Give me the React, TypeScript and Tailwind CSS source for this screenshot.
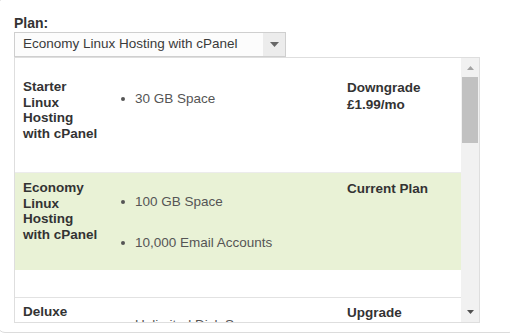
import { FC } from "react";

type Plan = {
  name: string;
  features: string[];
  action: string[];
  current?: boolean;
  rowClass: string;
  listClass: string;
};

const plans: Plan[] = [
  {
    name: "Starter Linux Hosting with cPanel",
    features: ["30 GB Space"],
    action: ["Downgrade", "£1.99/mo"],
    rowClass: "h-[115px] pt-[21px] border-b border-[#ececec]",
    listClass: "pt-[12px]",
  },
  {
    name: "Economy Linux Hosting with cPanel",
    features: ["100 GB Space", "10,000 Email Accounts"],
    action: ["Current Plan"],
    current: true,
    rowClass: "h-[97px] pt-[7px] bg-[#e9f2d6]",
    listClass: "pt-[14px]",
  },
  {
    name: "Deluxe Linux Hosting with cPanel",
    features: ["Unlimited Disk Space", "Unlimited Email Accounts"],
    action: ["Upgrade", "£4.99/mo"],
    rowClass: "pt-[6px]",
    listClass: "pt-[13px]",
  },
];

const PlanRow: FC<{ plan: Plan }> = ({ plan }) => (
  <div className={`grid grid-cols-[78px_246px_1fr] pl-[8px] ${plan.rowClass}`}>
    <div className="font-bold text-[13.5px] leading-[15.7px] text-[#333]">
      {plan.name}
    </div>
    <ul className={`flex flex-col gap-[25.5px] pl-[20px] ${plan.listClass}`}>
      {plan.features.map((f) => (
        <li key={f} className="flex items-center gap-[10px] text-[13.5px] leading-[15.5px] text-[#555]">
          <span className="w-[4px] h-[4px] rounded-full bg-[#555] shrink-0" />
          {f}
        </li>
      ))}
    </ul>
    <div className="font-bold text-[13.5px] leading-[17px] text-[#333]">
      {plan.action.map((a) => (
        <div key={a}>{a}</div>
      ))}
    </div>
  </div>
);

export default function App() {
  return (
    <div className="w-[520px] h-[335px] -ml-[3px] -mt-[2px] rounded-lg border border-[#dcdcdc] bg-white pl-[16px] pt-[16px] overflow-hidden font-['Liberation_Sans',Arial,sans-serif] text-[#333]">
      <div className="text-[14px] font-bold leading-[16px] h-[17px]">Plan:</div>

      {/* select */}
      <div className="flex w-[272px] h-[25px] border border-[#cfcfcf] bg-[#fcfcfc]">
        <div className="flex-1 pl-[8px] text-[13.5px] leading-[21px] text-[#3a3a3a]">
          Economy Linux Hosting with cPanel
        </div>
        <div className="w-[22px] bg-[#ececec] flex items-center justify-center">
          <svg width="9" height="5" viewBox="0 0 9 5">
            <polygon points="0,0 9,0 4.5,5" fill="#666" />
          </svg>
        </div>
      </div>

      {/* plan list */}
      <div className="flex w-[466px] h-[266px] border border-[#dedede]">
        <div className="flex-1 overflow-hidden bg-white">
          <PlanRow plan={plans[0]} />
          <PlanRow plan={plans[1]} />
          <div className="h-[28px] border-b border-[#e2e2e2]" />
          <PlanRow plan={plans[2]} />
        </div>
        <div className="w-[18px] bg-[#f1f1f1] flex flex-col">
          <div className="h-[19px] flex items-center justify-center">
            <svg width="7" height="4" viewBox="0 0 7 4">
              <polygon points="0,4 7,4 3.5,0" fill="#a3a3a3" />
            </svg>
          </div>
          <div className="h-[66px] mx-[1px] bg-[#c1c1c1]" />
          <div className="flex-1" />
          <div className="h-[20px] flex items-center justify-center">
            <svg width="7" height="4" viewBox="0 0 7 4">
              <polygon points="0,0 7,0 3.5,4" fill="#505050" />
            </svg>
          </div>
        </div>
      </div>
    </div>
  );
}
